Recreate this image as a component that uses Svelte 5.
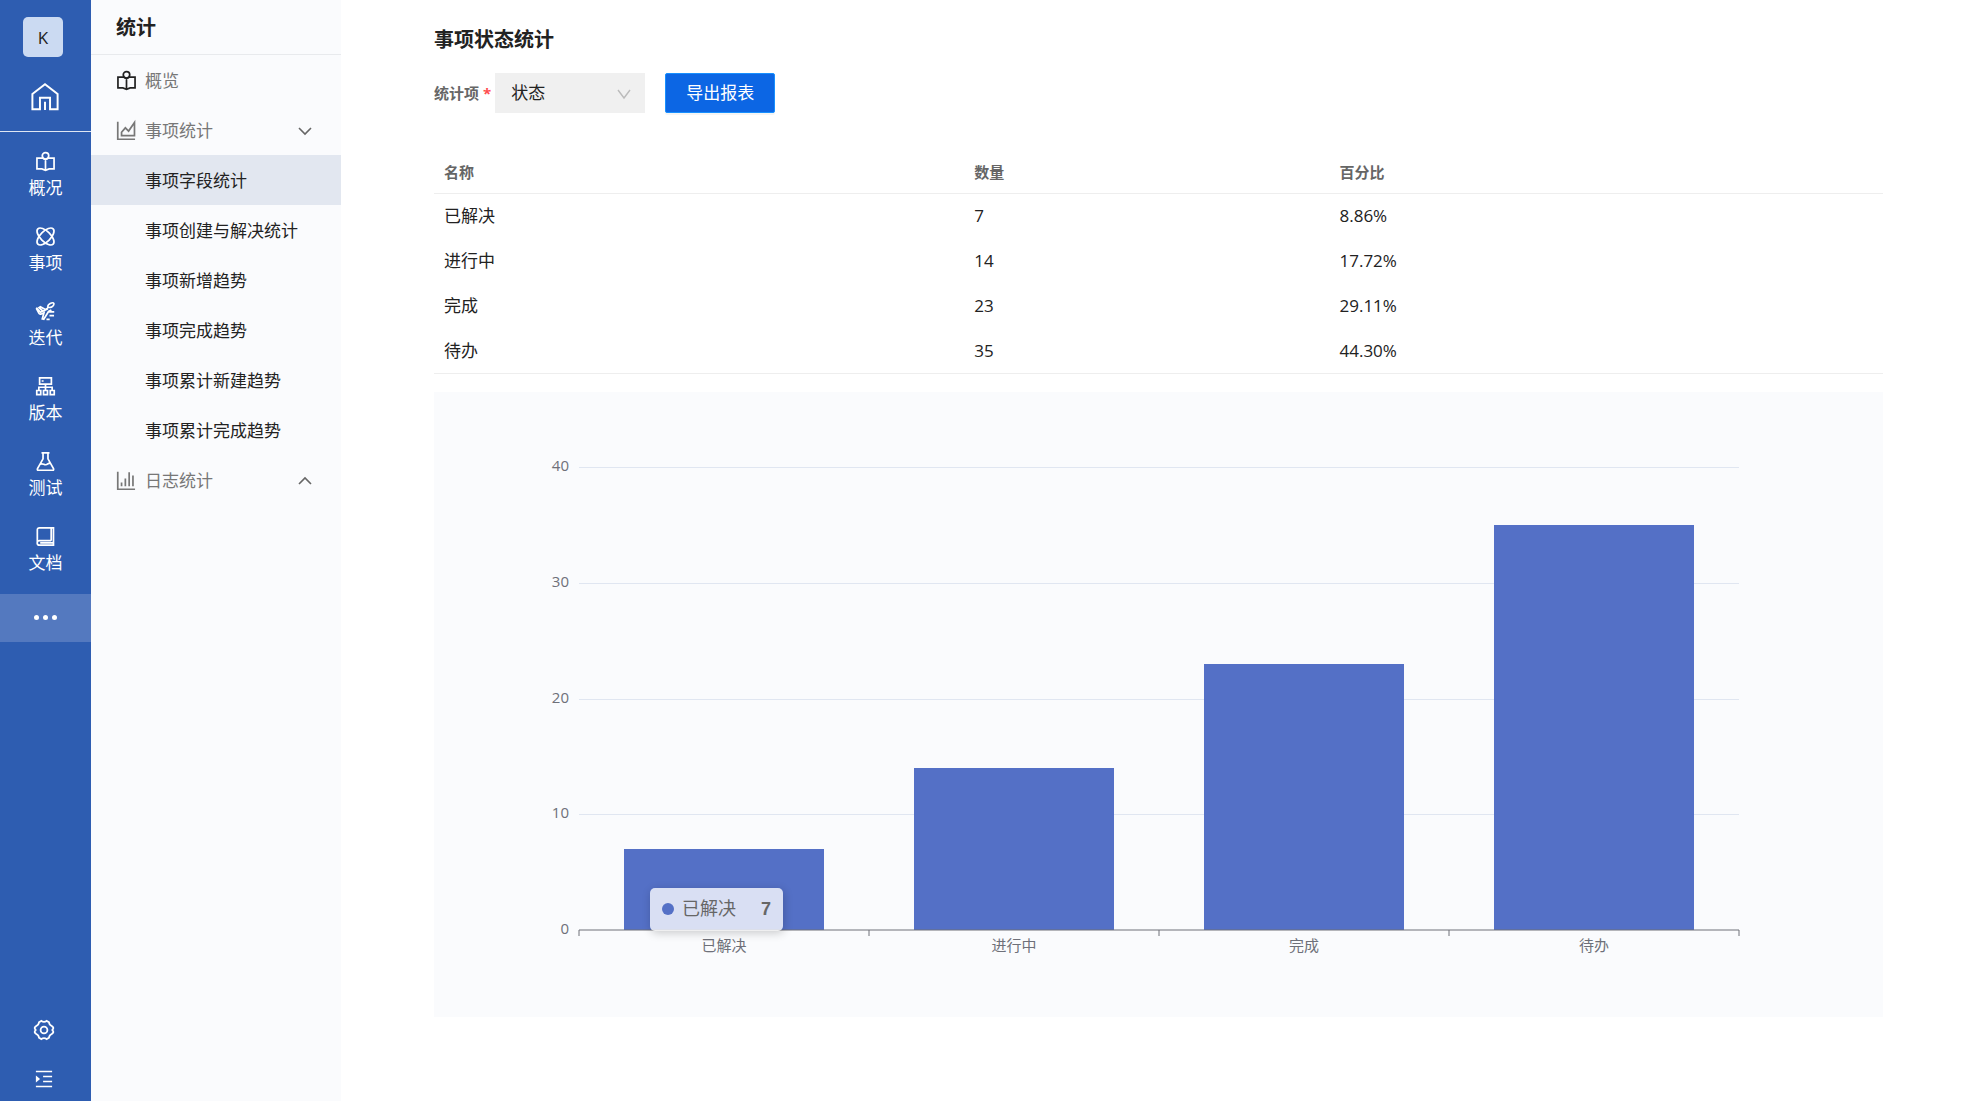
<script lang="ts">
  interface Row {
    name: string;
    count: number;
    percent: string;
  }

  const nav = [
    { icon: "read", label: "概况" },
    { icon: "atom", label: "事项" },
    { icon: "plane", label: "迭代" },
    { icon: "version", label: "版本" },
    { icon: "flask", label: "测试" },
    { icon: "book", label: "文档" },
  ];
  const fieldLinks = [
    "事项字段统计",
    "事项创建与解决统计",
    "事项新增趋势",
    "事项完成趋势",
    "事项累计新建趋势",
    "事项累计完成趋势",
  ];
  const rows: Row[] = [
    { name: "已解决", count: 7, percent: "8.86%" },
    { name: "进行中", count: 14, percent: "17.72%" },
    { name: "完成", count: 23, percent: "29.11%" },
    { name: "待办", count: 35, percent: "44.30%" },
  ];

  // chart geometry, in viewBox units
  const W = 1449;
  const H = 625;
  const left = 145;
  const right = 1305;
  const top = 75;
  const bottom = 538;
  const slot = (right - left) / rows.length;
  const barWidth = 200;
  const max = 40;
  const ticks = [0, 10, 20, 30, 40];
  const y = (v: number) => Math.round(bottom - (v / max) * (bottom - top));

  let active = $state(fieldLinks[0]);
  let field = $state("状态");
  let fieldsOpen = $state(true);
  let logsOpen = $state(false);
  let hovered = $state(0);
</script>

{#snippet icon(name: string, size: number)}
  <svg class="icon" width={size} height={size} viewBox="0 0 20 20" aria-hidden="true">
    {#if name === "read"}
      <circle cx="10" cy="4" r="3.4" />
      <path d="M6.6 6.4H1v11.4h5.2L10 19.2l3.8-1.4H19V6.4h-5.6M6.6 6.4 10 8l3.4-1.6M10 8v11" />
    {:else if name === "atom"}
      <ellipse cx="10" cy="10" rx="11.4" ry="5.4" transform="rotate(45 10 10)" />
      <ellipse cx="10" cy="10" rx="11.4" ry="5.4" transform="rotate(-45 10 10)" />
    {:else if name === "plane"}
      <path d="M12.6 6.2 9.8 8 4.6 5l-1.4.9 4 3.7-2.4 1.2L1 6.6l-.4.6 2.4 4.6c.5 1 1.6 1.2 2.6.8l2.8-1.2-1.8 6.4 1.6.4 5-8.2 3-1.6M7.2 9.6l5.4-2.4M12.4 4.4c.4-2 4.4-4.2 6-3.4 1.4 1-.4 3.8-2.2 4.4-1.8.6-4.2.6-3.8-1zM13.4 10.4h5.8M14.2 14.4H19M11 18.2h3.4" />
    {:else if name === "version"}
      <path d="M3.8 1h12.4v6.4H3.8zM10 7.4V14M3 14v-3.2h14V14M.8 14.2h4.2v4.4H.8zM7.9 14.2h4.2v4.4H7.9zM15 14.2h4.2v4.4H15zM6 4.2h2" />
    {:else if name === "flask"}
      <path d="M5.8 1h8.4M7.4 1v6.2L1.6 17.4q-.6 1.8.8 1.8h15.2q1.4 0 .8-1.8L12.6 7.2V1M4.4 13c2.4-1.6 4 .8 6 .4 1.8-.2 2.2-1.8 4.6-1.6" />
    {:else if name === "book"}
      <path d="M16 14.4H3.6a2.3 2.3 0 0 0 0 4.7H18.4V1H3.6C2.2 1 1.4 1.8 1.4 3v13.6M16 1v13.4M4.4 16.8h14" />
    {:else if name === "home"}
      <path d="M1 7.8 10 .9l9 6.9v11H13.6v-8.2H6.4v8.2H1zM10 13.4v5.8" />
    {:else if name === "area"}
      <path d="M.8.8v18.4H19M4.8 15.4v-3.6l4-4.6 3.4 3.4 6.2-9v13.8z" />
    {:else if name === "bars"}
      <path d="M.8.8v18.4H19M4.8 12v4M8.8 8v8M12.8 1.4V16M16.8 4.8V16" />
    {:else if name === "gear"}
      <circle cx="10" cy="10" r="3.4" />
      <path d="M7.4.9Q10 2.8 12.6.9L15 2.2Q15.2 5 17.8 6L19.2 7.4v1.4Q17.4 10 19.2 11.2v1.4L17.8 14Q15.2 15 15 17.8L12.6 19.1Q10 17.2 7.4 19.1L5 17.8Q4.8 15 2.2 14L.8 12.6v-1.4Q2.6 10 .8 8.8V7.4L2.2 6Q4.8 5 5 2.2z" />
    {:else if name === "indent"}
      <path d="M1 1.6h18M9 7.2h10M9 12.8h10M1 18.4h18" />
      <path class="solid" d="M1 6.2v7.6L5.6 10z" />
    {/if}
  </svg>
{/snippet}

{#snippet chevron(up: boolean)}
  <svg class="chevron" class:up width="14" height="14" viewBox="0 0 14 14" aria-hidden="true">
    <path d="M1 4l6 6 6-6" />
  </svg>
{/snippet}

<div class="app">
  <nav class="rail" aria-label="主导航">
    <div class="avatar">K</div>
    <a class="home" href="#home" aria-label="首页">{@render icon("home", 28)}</a>
    <div class="modules">
      {#each nav as item (item.label)}
        <a href="#{item.icon}">
          {@render icon(item.icon, 19)}
          <span>{item.label}</span>
        </a>
      {/each}
    </div>
    <button type="button" class="more" aria-label="更多"><i></i><i></i><i></i></button>
    <div class="tools">
      <button type="button" aria-label="设置">{@render icon("gear", 20)}</button>
      <button type="button" aria-label="展开">{@render icon("indent", 18)}</button>
    </div>
  </nav>

  <aside class="side">
    <h2>统计</h2>
    <a class="entry dark" href="#overview">{@render icon("read", 19)}<span>概览</span></a>
    <button type="button" class="entry" onclick={() => (fieldsOpen = !fieldsOpen)}>
      {@render icon("area", 19)}<span>事项统计</span>{@render chevron(!fieldsOpen)}
    </button>
    {#if fieldsOpen}
      {#each fieldLinks as link (link)}
        <a class="sub" class:active={link === active} href="#stat" onclick={() => (active = link)}>{link}</a>
      {/each}
    {/if}
    <button type="button" class="entry" onclick={() => (logsOpen = !logsOpen)}>
      {@render icon("bars", 19)}<span>日志统计</span>{@render chevron(!logsOpen)}
    </button>
  </aside>

  <main>
    <h1>事项状态统计</h1>
    <div class="toolbar">
      <label for="field">统计项<em>*</em></label>
      <div class="select">
        <select id="field" bind:value={field}>
          <option>状态</option>
        </select>
        <svg width="14" height="14" viewBox="0 0 14 14" aria-hidden="true"><path d="M1 3l6 8 6-8" /></svg>
      </div>
      <button type="button" class="export">导出报表</button>
    </div>

    <table>
      <thead>
        <tr><th class="name">名称</th><th class="count">数量</th><th>百分比</th></tr>
      </thead>
      <tbody>
        {#each rows as row (row.name)}
          <tr><td>{row.name}</td><td>{row.count}</td><td>{row.percent}</td></tr>
        {/each}
      </tbody>
    </table>

    <div class="chart">
      <svg viewBox="0 0 {W} {H}" role="img" aria-label="事项状态统计">
        {#each ticks as t (t)}
          {#if t > 0}
            <line class="grid" x1={left} x2={right} y1={y(t) + 0.5} y2={y(t) + 0.5} />
          {/if}
          <text class="tick" x={left - 10} y={y(t) + 4}>{t}</text>
        {/each}
        {#each rows as row, i (row.name)}
          <!-- svelte-ignore a11y_no_static_element_interactions -->
          <rect
            class="bar"
            x={left + slot * i + (slot - barWidth) / 2}
            y={y(row.count)}
            width={barWidth}
            height={bottom - y(row.count)}
            onmouseenter={() => (hovered = i)}
          />
          <text class="category" x={left + slot * (i + 0.5)} y={bottom + 21}>{row.name}</text>
        {/each}
        <line class="axis" x1={left} x2={right} y1={bottom} y2={bottom} />
        {#each [0, 1, 2, 3, 4] as i (i)}
          <line class="axis" x1={left + slot * i} x2={left + slot * i} y1={bottom} y2={bottom + 6} />
        {/each}
      </svg>
      <div
        class="tooltip"
        style:left="{((left + slot * hovered + 71) / W) * 100}%"
        style:top="{((bottom - 42) / H) * 100}%"
      >
        <i></i><span>{rows[hovered].name}</span><b>{rows[hovered].count}</b>
      </div>
    </div>
  </main>
</div>

<style>
  :global(body) {
    margin: 0;
    background: #fff;
    color: #222;
    font: 17px/26px "Open Sans", "Noto Sans CJK SC", sans-serif;
  }
  .app {
    display: flex;
    min-height: 100vh;
  }
  a {
    color: inherit;
    text-decoration: none;
  }
  button {
    border: 0;
    background: none;
    color: inherit;
    font: inherit;
    cursor: pointer;
  }
  .icon {
    flex: none;
    overflow: visible;
    fill: none;
    stroke: currentColor;
    stroke-width: 1.8;
  }
  .icon .solid {
    fill: currentColor;
    stroke: none;
  }

  .rail {
    box-sizing: border-box;
    flex: none;
    width: 91px;
    display: flex;
    flex-direction: column;
    align-items: center;
    background: #2e5db1;
    color: #fff;
  }
  .avatar {
    width: 40px;
    height: 40px;
    margin: 17px 5px 26px 0;
    border-radius: 5px;
    background: #cbdaf2;
    color: #222;
    line-height: 41px;
    text-align: center;
  }
  .home {
    height: 28px;
    padding: 0 2px 20px 0;
  }
  .home .icon {
    stroke-width: 1.4;
  }
  .modules {
    width: 100%;
    padding-top: 12px;
    border-top: 1px solid #dfe6f3;
  }
  .modules a {
    height: 67px;
    padding-top: 8px;
    display: flex;
    flex-direction: column;
    align-items: center;
    gap: 4px;
  }
  .more {
    width: 100%;
    height: 48px;
    padding: 0 0 2px;
    display: flex;
    align-items: center;
    justify-content: center;
    gap: 4px;
    background: #5479bf;
  }
  .more i {
    width: 5px;
    height: 5px;
    border-radius: 50%;
    background: #fff;
  }
  .tools {
    margin-top: auto;
    padding: 0 3px 13px 0;
    display: flex;
    flex-direction: column;
    align-items: center;
    gap: 30px;
  }
  .tools button {
    display: flex;
    padding: 0;
    justify-content: center;
  }

  .side {
    flex: none;
    width: 250px;
    background: #fafbfd;
    color: #222;
  }
  h1,
  h2 {
    margin: 0;
    font-size: 20px;
    line-height: 30px;
  }
  h2 {
    padding: 13px 25px 11px;
    border-bottom: 1px solid #e8eaed;
  }
  .entry {
    box-sizing: border-box;
    width: 100%;
    height: 50px;
    padding: 1px 29px 0 26px;
    display: flex;
    align-items: center;
    gap: 9px;
    color: #777;
  }
  .entry.dark .icon {
    color: #222;
  }
  .chevron {
    margin-left: auto;
    fill: none;
    stroke: #666;
    stroke-width: 1.6;
  }
  .chevron.up {
    transform: rotate(180deg);
  }
  .sub {
    display: block;
    padding: 13px 0 11px 54px;
  }
  .sub.active {
    background: #e2e7f0;
  }

  main {
    flex: 1;
    min-width: 0;
    padding: 25px 88px 24px 93px;
  }
  .toolbar {
    display: flex;
    align-items: center;
    margin: 18px 0 39px;
  }
  label {
    margin-right: 4px;
    color: #666;
    font-size: 15px;
    font-weight: 700;
  }
  em {
    margin-left: 4px;
    color: #ff4d4f;
    font-style: normal;
  }
  .select {
    position: relative;
    width: 150px;
    margin-right: 20px;
  }
  .select svg {
    position: absolute;
    right: 14px;
    top: 14px;
    fill: none;
    stroke: #bbb;
    stroke-width: 1.4;
    pointer-events: none;
  }
  select {
    width: 100%;
    height: 40px;
    padding: 0 16px;
    border: 0;
    appearance: none;
    background: #f0f0f0;
    color: inherit;
    font: inherit;
  }
  .export {
    width: 110px;
    height: 40px;
    padding: 0;
    border: 1px solid #1890ff;
    border-radius: 2px;
    background: #0c66e4;
    color: #fff;
    box-shadow: 0 2px 0 rgba(0, 0, 0, 0.04);
  }

  table {
    width: 100%;
    border-collapse: collapse;
    table-layout: fixed;
    border-bottom: 1px solid #eee;
  }
  th,
  td {
    box-sizing: border-box;
    height: 45px;
    padding: 1px 10px 0;
    text-align: left;
  }
  th {
    height: 41px;
    padding-top: 0;
    border-bottom: 1px solid #eee;
    color: #666;
    font-size: 15px;
    font-weight: 700;
  }
  .name {
    width: 36.6%;
  }
  .count {
    width: 25.2%;
  }

  .chart {
    position: relative;
    margin-top: 18px;
    background: #fafbfd;
  }
  .chart svg {
    display: block;
    width: 100%;
    height: auto;
  }
  .grid {
    stroke: #e0e6f1;
  }
  .axis {
    stroke: #6e7079;
  }
  .bar {
    fill: #5470c6;
  }
  .chart text {
    fill: #6e7079;
    font-size: 15px;
  }
  .tick {
    text-anchor: end;
  }
  .category {
    text-anchor: middle;
  }
  .tooltip {
    position: absolute;
    display: flex;
    align-items: center;
    height: 43px;
    padding: 0 12px;
    border-radius: 5px;
    background: rgba(255, 255, 255, 0.78);
    box-shadow: 1px 2px 10px rgba(0, 0, 0, 0.2);
    color: #666;
    font-family: "Liberation Sans", "Noto Sans CJK SC", sans-serif;
    font-size: 18px;
    pointer-events: none;
  }
  .tooltip i {
    width: 12px;
    height: 12px;
    margin-right: 8px;
    border-radius: 50%;
    background: #5470c6;
  }
  .tooltip b {
    margin-left: 25px;
  }
</style>
